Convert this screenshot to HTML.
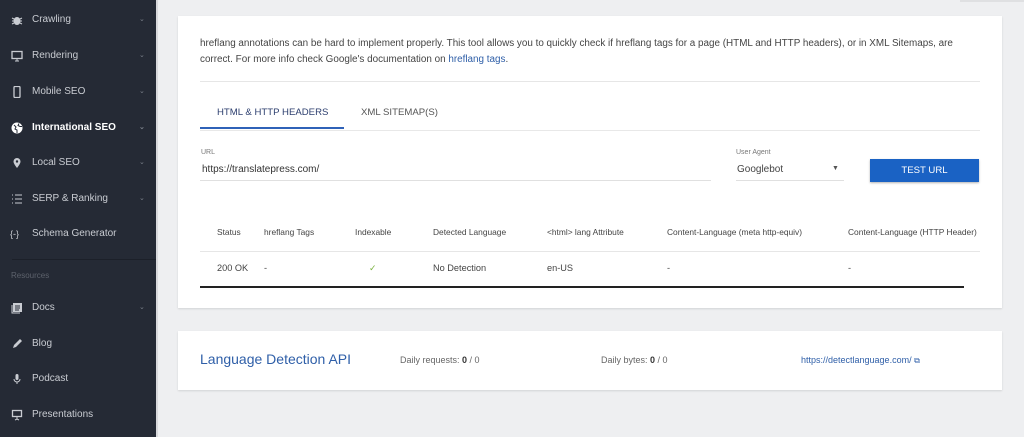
<!DOCTYPE html>
<html><head><meta charset="utf-8"><style>
*{margin:0;padding:0;box-sizing:border-box}
body{width:1024px;height:437px;overflow:hidden;background:#eeeff1;font-family:"Liberation Sans",sans-serif;position:relative}
.sb{position:absolute;left:0;top:0;width:156px;height:437px;background:#252a35}
.sb2{position:absolute;left:156px;top:0;width:2px;height:437px;background:#d8d9dc}
.it{position:absolute;left:0;width:156px;height:20px;color:#c9ccd2;font-size:10px;line-height:20px}
.it .t{position:absolute;left:32px}
.it .i{position:absolute;left:11px;top:4px;width:12px;height:12px}
.it .c{position:absolute;left:139px;font-size:7px;color:#7c818b}
.act{color:#fff;font-weight:bold}
.abs{position:absolute}
.card{position:absolute;background:#fff;box-shadow:0 1px 2px rgba(0,0,0,.12)}
</style></head><body>
<div class="sb"></div><div class="sb2"></div>
<div class="it" style="top:10px"><svg class="i" viewBox="0 0 12 12"><ellipse cx="6" cy="7" rx="3.5" ry="4" fill="#c9ccd2"/><path d="M1 4l2 1M11 4l-2 1M1 7h2M11 7H9M1 10l2-1M11 10l-2-1" stroke="#c9ccd2"/></svg><span class="t">Crawling</span><span class="c">⌄</span></div>
<div class="it" style="top:46px"><svg class="i" viewBox="0 0 12 12"><rect x="1" y="1.5" width="10" height="7" fill="none" stroke="#c9ccd2" stroke-width="1.3"/><path d="M4 11h4M6 8.5v2.5" stroke="#c9ccd2"/></svg><span class="t">Rendering</span><span class="c">⌄</span></div>
<div class="it" style="top:82px"><svg class="i" viewBox="0 0 12 12"><rect x="3" y="0.5" width="6" height="11" rx="1" fill="none" stroke="#c9ccd2" stroke-width="1.3"/></svg><span class="t">Mobile SEO</span><span class="c">⌄</span></div>
<div class="it act" style="top:118px"><svg class="i" viewBox="0 0 12 12"><circle cx="6" cy="6" r="5.5" fill="#fff"/><path d="M3 3l2 2-1 2 2 1v3M8 1.5l-1 2 2 1 2 0" stroke="#252a35" fill="none"/></svg><span class="t">International SEO</span><span class="c">⌄</span></div>
<div class="it" style="top:153px"><svg class="i" viewBox="0 0 12 12"><path d="M6 11C3 7 2.5 5.5 2.5 4.5a3.5 3.5 0 017 0C9.5 5.5 9 7 6 11z" fill="#c9ccd2"/><circle cx="6" cy="4.5" r="1.2" fill="#252a35"/></svg><span class="t">Local SEO</span><span class="c">⌄</span></div>
<div class="it" style="top:189px"><svg class="i" viewBox="0 0 12 12"><path d="M1 2h1M1 6h1M1 10h1M4 2h7M4 6h7M4 10h7" stroke="#c9ccd2"/></svg><span class="t">SERP &amp; Ranking</span><span class="c">⌄</span></div>
<div class="it" style="top:224px"><span class="abs" style="left:10px;font-size:9px">{-}</span><span class="t">Schema Generator</span></div>
<div class="abs" style="left:12px;top:259px;width:144px;height:1px;background:#1c2029"></div>
<div class="abs" style="left:11px;top:271px;font-size:8px;color:#5d626c">Resources</div>
<div class="it" style="top:298px"><svg class="i" viewBox="0 0 12 12"><rect x="2" y="1" width="9" height="9" fill="#c9ccd2"/><path d="M4 4h5M4 6h5M4 8h4" stroke="#252a35"/><path d="M1 3v8h8" stroke="#c9ccd2" fill="none"/></svg><span class="t">Docs</span><span class="c">⌄</span></div>
<div class="it" style="top:334px"><svg class="i" viewBox="0 0 12 12"><path d="M2 10l1-3 6-6 2 2-6 6z" fill="#c9ccd2"/></svg><span class="t">Blog</span></div>
<div class="it" style="top:369px"><svg class="i" viewBox="0 0 12 12"><rect x="4.5" y="1" width="3" height="6" rx="1.5" fill="#c9ccd2"/><path d="M3 6a3 3 0 006 0M6 9v2" stroke="#c9ccd2" fill="none"/></svg><span class="t">Podcast</span></div>
<div class="it" style="top:405px"><svg class="i" viewBox="0 0 12 12"><rect x="1.5" y="1.5" width="9" height="6" fill="none" stroke="#c9ccd2" stroke-width="1.3"/><path d="M6 8v2M4 11l2-1 2 1" stroke="#c9ccd2" fill="none"/></svg><span class="t">Presentations</span></div>

<div class="abs" style="left:960px;top:0;width:64px;height:2px;background:#dfe0e2"></div>

<div class="card" style="left:178px;top:16px;width:824px;height:292px"></div>
<div class="abs" style="left:200px;top:36px;width:765px;font-size:9.9px;line-height:16px;color:#444">hreflang annotations can be hard to implement properly. This tool allows you to quickly check if hreflang tags for a page (HTML and HTTP headers), or in XML Sitemaps, are correct. For more info check Google's documentation on <span style="color:#2f5fa8">hreflang tags</span>.</div>
<div class="abs" style="left:200px;top:81px;width:780px;height:1px;background:#e6e6e6"></div>
<div class="abs" style="left:217px;top:107px;font-size:9.6px;color:#2c3e6e">HTML &amp; HTTP HEADERS</div>
<div class="abs" style="left:361px;top:107px;font-size:9.6px;color:#555">XML SITEMAP(S)</div>
<div class="abs" style="left:200px;top:130px;width:780px;height:1px;background:#e8e8e8"></div>
<div class="abs" style="left:200px;top:127px;width:144px;height:2px;background:#2f62b8"></div>
<div class="abs" style="left:201px;top:149px;font-size:7px;color:#777">URL</div>
<div class="abs" style="left:202px;top:164px;font-size:10px;color:#333">https://translatepress.com/</div>
<div class="abs" style="left:200px;top:180px;width:511px;height:1px;background:#e0e0e0"></div>
<div class="abs" style="left:736px;top:149px;font-size:7px;color:#777">User Agent</div>
<div class="abs" style="left:737px;top:164px;font-size:10px;color:#444">Googlebot</div>
<div class="abs" style="left:832px;top:165px;font-size:7px;color:#555">▼</div>
<div class="abs" style="left:736px;top:180px;width:108px;height:1px;background:#e0e0e0"></div>
<div class="abs" style="left:870px;top:159px;width:109px;height:23px;background:#1a62c4;box-shadow:0 1px 2px rgba(0,0,0,.3);color:#fff;font-size:9.6px;line-height:23px;text-align:center">TEST URL</div>
<div class="abs" style="left:0;top:227px;font-size:8.4px;color:#444;width:1024px;height:12px">
<span class="abs" style="left:217px">Status</span><span class="abs" style="left:264px">hreflang Tags</span><span class="abs" style="left:355px">Indexable</span><span class="abs" style="left:433px">Detected Language</span><span class="abs" style="left:547px">&lt;html&gt; lang Attribute</span><span class="abs" style="left:667px">Content-Language (meta http-equiv)</span><span class="abs" style="left:848px">Content-Language (HTTP Header)</span></div>
<div class="abs" style="left:200px;top:251px;width:780px;height:1px;background:#e6e6e6"></div>
<div class="abs" style="left:0;top:263px;font-size:9.2px;color:#444;width:1024px;height:12px">
<span class="abs" style="left:217px">200 OK</span><span class="abs" style="left:264px">-</span><span class="abs" style="left:369px;color:#7cb342">✓</span><span class="abs" style="left:433px">No Detection</span><span class="abs" style="left:547px">en-US</span><span class="abs" style="left:667px">-</span><span class="abs" style="left:848px">-</span></div>
<div class="abs" style="left:200px;top:286px;width:764px;height:2px;background:#222"></div>

<div class="card" style="left:178px;top:331px;width:824px;height:59px"></div>
<div class="abs" style="left:200px;top:351px;font-size:14px;color:#2f5fa8">Language Detection API</div>
<div class="abs" style="left:400px;top:355px;font-size:9px;color:#666">Daily requests: <b style="color:#333">0</b> / 0</div>
<div class="abs" style="left:601px;top:355px;font-size:9px;color:#666">Daily bytes: <b style="color:#333">0</b> / 0</div>
<div class="abs" style="left:801px;top:355px;font-size:9px;color:#2f5fa8">https://detectlanguage.com/ <span style="font-size:8px">⧉</span></div>
</body></html>
